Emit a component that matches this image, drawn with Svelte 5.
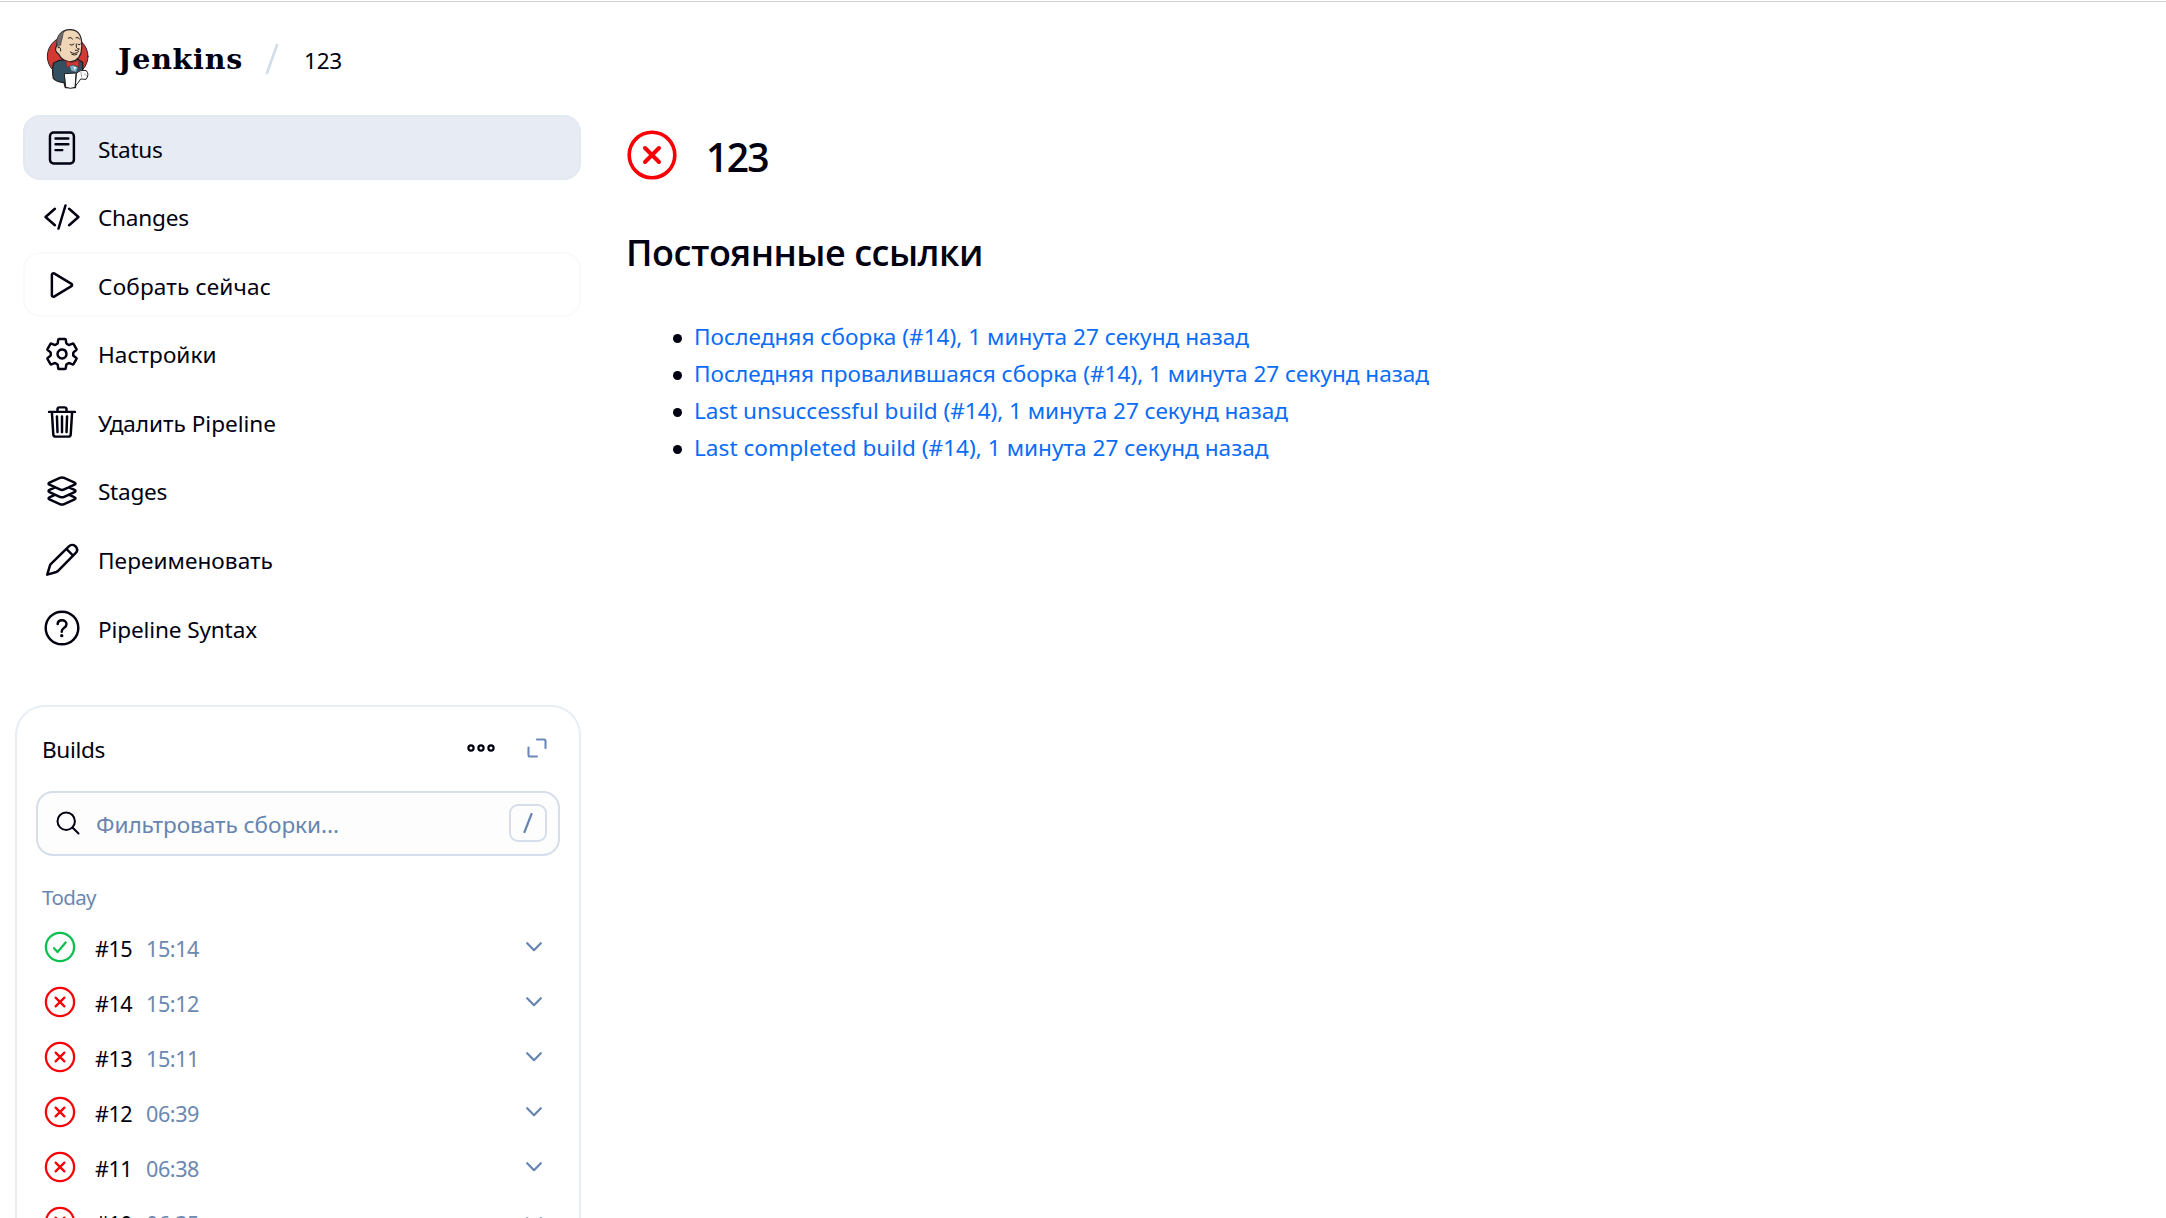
<script>
  const menu = [
    { icon: 'status', label: 'Status', width: 64.5, state: 'active' },
    { icon: 'code', label: 'Changes', width: 91 },
    { icon: 'play', label: 'Собрать сейчас', width: 173, state: 'outlined' },
    { icon: 'gear', label: 'Настройки', width: 118.5 },
    { icon: 'trash', label: 'Удалить Pipeline', width: 178 },
    { icon: 'layers', label: 'Stages', width: 69 },
    { icon: 'pencil', label: 'Переименовать', width: 175 },
    { icon: 'help', label: 'Pipeline Syntax', width: 159 }
  ];

  const links = [
    { label: 'Последняя сборка (#14), 1 минута 27 секунд назад', width: 555 },
    { label: 'Последняя провалившаяся сборка (#14), 1 минута 27 секунд назад', width: 735 },
    { label: 'Last unsuccessful build (#14), 1 минута 27 секунд назад', width: 594 },
    { label: 'Last completed build (#14), 1 минута 27 секунд назад', width: 574.5 }
  ];

  const builds = [
    { id: '#15', time: '15:14', ok: true },
    { id: '#14', time: '15:12' },
    { id: '#13', time: '15:11' },
    { id: '#12', time: '06:39' },
    { id: '#11', time: '06:38' },
    { id: '#10', time: '06:35' }
  ];

  // Spreads the letters so that the label takes the given width.
  function fit(node, width) {
    const natural = node.getBoundingClientRect().width;
    node.style.letterSpacing = `${(width - natural) / node.textContent.length}px`;
  }
</script>

<div class="page">
  <header>
    <svg class="logo" viewBox="0 0 192 216">
      <ellipse cx="95" cy="106" rx="61" ry="60" fill="#d33833" stroke="#2b2326" stroke-width="3" />
      <path d="M70 118 L53 126 Q47 146 52 172 Q62 183 84 185 L88 200 H118 L122 180 L140 150 L140 124 L124 114 Z" fill="#335061" stroke="#231f20" stroke-width="4" stroke-linejoin="round" />
      <path d="M62 74 C56 84 58 94 68 99 C74 113 89 124 105 122 C125 119 136 105 137 82 C139 55 134 27 104 26 C74 25 62 49 62 74Z" fill="#f0d6b7" stroke="#231f20" stroke-width="3.5" />
      <path d="M64 76 C58 54 68 35 86 29 C77 40 82 49 76 60 L74 72 Z" fill="#6d6b6d" stroke="#3b383a" stroke-width="2" />
      <path d="M66 80 Q75 75 74 90 M97 51 Q105 46 110 54 M120 50 Q127 47 131 54 M102 71 Q108 76 114 69 M126 70 Q129 74 133 69 M121 69 Q118 84 130 84 Q127 90 118 88 M103 93 Q118 103 128 91 M107 100 Q116 105 123 100" fill="none" stroke="#231f20" stroke-width="3" stroke-linecap="round" />
      <path d="M90 119 L106 125 L128 118 L128 138 L110 132 L93 139 Z" fill="#d33833" stroke="#81211f" stroke-width="2" />
      <path d="M101 135 L112 132 L126 139 L121 154 L106 150 Z" fill="#81b0c4" stroke="#335061" stroke-width="2" />
      <path d="M113 137 L121 139 L115 147 Z" fill="#fff" />
      <path d="M86 158 L121 156 L117 199 Q103 205 90 199 Z M121 158 Q130 145 151 149 Q161 161 150 175 L134 174 L128 183 L119 193 Z" fill="#fff" stroke="#231f20" stroke-width="3" stroke-linejoin="round" />
      <path d="M135 154 L137 168 M145 159 L151 164" stroke="#777" stroke-width="2" />
    </svg>
    <span class="brand"><span use:fit={125}>Jenkins</span></span>
    <svg class="divider" viewBox="0 0 14 32"><path d="M12 2 L2 30" /></svg>
    <span class="crumb"><span use:fit={38}>123</span></span>
  </header>

  <div class="columns">
    <aside>
      <nav>
        {#each menu as item}
          <a class="item {item.state ?? ''}">
            <svg class="icon" viewBox="0 0 512 512">
              {#if item.icon === 'status'}
                <rect x="85" y="36" width="340" height="440" rx="52" />
                <path d="M164 120H346M164 204H346M164 286H260" />
              {:else if item.icon === 'code'}
                <path d="M155 373L22 256l133-117M357 373l133-117-133-117M306 92l-100 328" />
              {:else if item.icon === 'play'}
                <path d="M112 111v290c0 17.44 17 28.52 31 20.16l247.9-148.37c12.12-7.25 12.12-26.33 0-33.58L143 90.84c-14-8.36-31 2.72-31 20.16z" />
              {:else if item.icon === 'gear'}
                <path d="M262.29 192.31a64 64 0 1057.4 57.4 64.13 64.13 0 00-57.4-57.4z" />
                <path d="M416.39 256a154.34 154.34 0 01-1.53 20.79l45.21 35.46a10.81 10.81 0 012.45 13.75l-42.77 74a10.81 10.81 0 01-13.14 4.59l-44.9-18.08a16.11 16.11 0 00-15.17 1.75A164.48 164.48 0 01325 400.8a15.94 15.94 0 00-8.82 12.14l-6.73 47.89a11.08 11.08 0 01-10.68 9.17h-85.54a11.11 11.11 0 01-10.69-8.87l-6.72-47.82a16.07 16.07 0 00-9-12.22 155.3 155.3 0 01-21.46-12.57 16 16 0 00-15.11-1.71l-44.89 18.07a10.81 10.81 0 01-13.14-4.58l-42.77-74a10.8 10.8 0 012.45-13.75l38.21-30a16.05 16.05 0 006-14.08c-.36-4.17-.58-8.33-.58-12.5s.21-8.27.58-12.35a16 16 0 00-6.07-13.94l-38.19-30A10.81 10.81 0 0149.48 186l42.77-74a10.81 10.81 0 0113.14-4.59l44.9 18.08a16.11 16.11 0 0015.17-1.75A164.48 164.48 0 01187 111.2a15.94 15.94 0 008.82-12.14l6.73-47.89A11.08 11.08 0 01213.23 42h85.54a11.11 11.11 0 0110.69 8.87l6.72 47.82a16.07 16.07 0 009 12.22 155.3 155.3 0 0121.46 12.57 16 16 0 0015.11 1.71l44.89-18.07a10.81 10.81 0 0113.14 4.58l42.77 74a10.8 10.8 0 01-2.45 13.75l-38.21 30a16.05 16.05 0 00-6.05 14.08c.33 4.14.55 8.3.55 12.47z" />
              {:else if item.icon === 'trash'}
                <path d="M112 112l20 320c.95 18.49 14.4 32 32 32h184c17.67 0 30.87-13.51 32-32l20-320M72 112h368M192 112V72a23.93 23.93 0 0124-24h80a23.93 23.93 0 0124 24v40M256 176v224M184 176l8 224M328 176l-8 224" />
              {:else if item.icon === 'layers'}
                <path d="M434.8 137.65l-149.36-68.1c-16.19-7.4-42.69-7.4-58.88 0L77.3 137.65c-17.6 8-17.6 21.09 0 29.09l148 67.5c16.89 7.7 44.69 7.7 61.58 0l148-67.5c17.52-8 17.52-21.1-.08-29.09zM160 308.52l-82.7 37.11c-17.6 8-17.6 21.1 0 29.1l148 67.5c16.89 7.69 44.69 7.69 61.58 0l148-67.5c17.6-8 17.6-21.1 0-29.1l-79.94-38.47M160 204.48l-82.8 37.16c-17.6 8-17.6 21.1 0 29.1l148 67.49c16.89 7.7 44.69 7.7 61.58 0l148-67.49c17.7-8 17.7-21.1.1-29.1L352 204.48" />
              {:else if item.icon === 'pencil'}
                <path d="M46 464L84 336Q88 322 99 311L354 62C378 38 418 36 446 60C476 88 480 126 452 156L204 408Q192 420 176 426ZM318 98L412 192" />
              {:else}
                <circle cx="256" cy="256" r="232" />
                <path d="M194 200C196 164 224 146 256 146C292 146 320 168 320 202C320 234 300 244 280 259C260 272 252 286 252 308" />
                <circle class="dot" cx="252" cy="365" r="24" />
              {/if}
            </svg>
            <span class="label"><span use:fit={item.width}>{item.label}</span></span>
          </a>
        {/each}
      </nav>

      <section class="card">
        <div class="card-head">
          <span class="card-title"><span use:fit={63}>Builds</span></span>
          <svg class="more" viewBox="0 0 30 10">
            <circle cx="5" cy="5" r="2.6" /><circle cx="15" cy="5" r="2.6" /><circle cx="25" cy="5" r="2.6" />
          </svg>
          <svg class="expand" viewBox="0 0 20 20">
            <path d="M10 1.5H17Q18.5 1.5 18.5 3V10M1.5 9.5V17Q1.5 18.5 3 18.5H10" />
          </svg>
        </div>
        <div class="search">
          <svg class="lens" viewBox="0 0 24 24"><circle cx="10.2" cy="10.2" r="8.7" /><path d="M16.5 16.5L22.5 22.5" /></svg>
          <span class="hint"><span use:fit={243}>Фильтровать сборки...</span></span>
          <kbd><svg viewBox="0 0 10 20"><path d="M8.5 1L1.5 19" /></svg></kbd>
        </div>
        <div class="day"><span use:fit={54}>Today</span></div>
        {#each builds as build}
          <div class="build">
            <svg class="result" class:ok={build.ok} viewBox="-16 -16 32 32">
              <circle r="14.1" />
              {#if build.ok}
                <path d="M-6 1.2L-2.4 5L5.6 -4.6" />
              {:else}
                <path d="M-4.4 -4.4L4.4 4.4M4.4 -4.4L-4.4 4.4" />
              {/if}
            </svg>
            <span class="number"><span use:fit={37}>{build.id}</span></span>
            <span class="time"><span use:fit={53}>{build.time}</span></span>
            <svg class="chevron" viewBox="0 0 16 10"><path d="M1.2 1.2L8 8.2L14.8 1.2" /></svg>
          </div>
        {/each}
      </section>
    </aside>

    <main>
      <div class="title">
        <svg class="fail" viewBox="-25 -25 50 50">
          <circle r="22.8" /><path d="M-7 -7L7 7M7 -7L-7 7" />
        </svg>
        <h1><span use:fit={62}>123</span></h1>
      </div>
      <h2><span use:fit={357}>Постоянные ссылки</span></h2>
      <ul>
        {#each links as link}
          <li><a><span use:fit={link.width}>{link.label}</span></a></li>
        {/each}
      </ul>
    </main>
  </div>
</div>

<style>
  :global(body) { background: #fff; }
  .page {
    box-sizing: border-box;
    width: 2166px;
    height: 1218px;
    overflow: hidden;
    padding-top: 1px;
    color: #000010;
    font: 22.6px/34px "Noto Sans", "Open Sans", sans-serif;
    white-space: nowrap;
  }
  svg {
    display: block;
    flex: none;
    fill: none;
    stroke: currentColor;
    stroke-linecap: round;
    stroke-linejoin: round;
  }
  header {
    box-sizing: border-box;
    height: 114px;
    display: flex;
    align-items: flex-start;
    border-top: 1px solid #cfd1d1;
    padding-left: 36px;
  }
  .logo { width: 64px; height: 72px; margin-top: 19px; stroke: none; }
  .brand {
    width: 147px;
    margin: 40px 0 0 18px;
    font: bold 28.5px/34px "DejaVu Serif", serif;
  }
  .divider { width: 14px; height: 32px; margin-top: 41px; color: #d3dde9; stroke-width: 2.6; }
  .crumb { margin: 42px 0 0 25px; }
  .columns { display: flex; }
  aside { width: 581px; flex: none; }
  nav { display: grid; gap: 3.6px; padding-left: 23px; }
  .item {
    box-sizing: border-box;
    height: 65px;
    display: flex;
    align-items: center;
    gap: 18px;
    padding-left: 19px;
    border: 2px solid transparent;
    border-radius: 17px;
  }
  .active { background: #e7ebf3; border-color: #e3e9f1; }
  .outlined { border-color: #fafafb; }
  .icon { width: 36px; height: 36px; margin-top: 1px; stroke-width: 35; }
  .dot { fill: currentColor; stroke: none; }
  .label { padding-top: 4px; }
  .card {
    box-sizing: border-box;
    height: 560px;
    margin: 44.6px 0 0 15px;
    padding: 0 19px;
    border: 2px solid #e8edf4;
    border-radius: 30px;
  }
  .card-head { height: 84px; display: flex; align-items: center; padding-left: 6px; }
  .card-title { flex: 1; padding-top: 3px; }
  .more { width: 30px; height: 10px; stroke-width: 2.2; margin: 0 31px 2px 0; }
  .expand { width: 20px; height: 20px; margin: 0 13px 2px 0; stroke-width: 2.1; color: #6b8ab8; }
  .search {
    box-sizing: border-box;
    height: 65px;
    display: flex;
    align-items: center;
    padding: 0 11px 0 18px;
    border: 2px solid #d5deea;
    border-radius: 17px;
    background: #fdfdfd;
  }
  .lens { width: 24px; height: 24px; stroke-width: 2; }
  .hint { flex: 1; padding: 3px 0 0 16px; color: #6685b0; }
  kbd {
    box-sizing: border-box;
    width: 38px;
    height: 38px;
    display: grid;
    place-items: center;
    border: 2px solid #d5deea;
    border-radius: 9px;
    color: #6685b0;
  }
  kbd svg { width: 10px; height: 20px; stroke-width: 2.2; }
  .day { height: 36px; margin-top: 24px; padding: 0 0 4px 6px; font-size: 20.5px; color: #6b88b0; }
  .build { height: 55px; display: flex; align-items: center; padding-left: 8px; font-size: 21.6px; }
  .result { width: 32px; height: 32px; stroke-width: 2.3; color: #f50408; }
  .ok { color: #0cc050; }
  .number { box-sizing: border-box; width: 70px; padding: 4px 0 0 19px; }
  .time { flex: 1; padding-top: 4px; color: #6b88b0; }
  .chevron { width: 16px; height: 10px; margin-right: 18px; stroke-width: 2.2; color: #6685b0; }
  main { padding-left: 46px; }
  .title { display: flex; align-items: center; height: 79px; }
  .fail { width: 50px; height: 50px; stroke-width: 3.6; color: #f90006; }
  .fail path { stroke-width: 4; }
  h1, h2 { margin: 0; font-family: "Open Sans", "Noto Sans", sans-serif; font-weight: 600; }
  h1 { padding: 5px 0 0 29px; font-size: 39px; line-height: 50px; }
  h2 { margin: 34px 0 0 -1px; font-size: 36px; line-height: 50px; }
  ul { margin: 40px 0 0; padding-left: 67px; list-style: none; }
  li { height: 37px; line-height: 37px; display: flex; align-items: center; color: #0b6cf7; }
  li::before {
    content: "";
    width: 9px;
    height: 9px;
    margin: 3px 12px 0 -21px;
    border-radius: 50%;
    background: #000010;
  }
</style>
